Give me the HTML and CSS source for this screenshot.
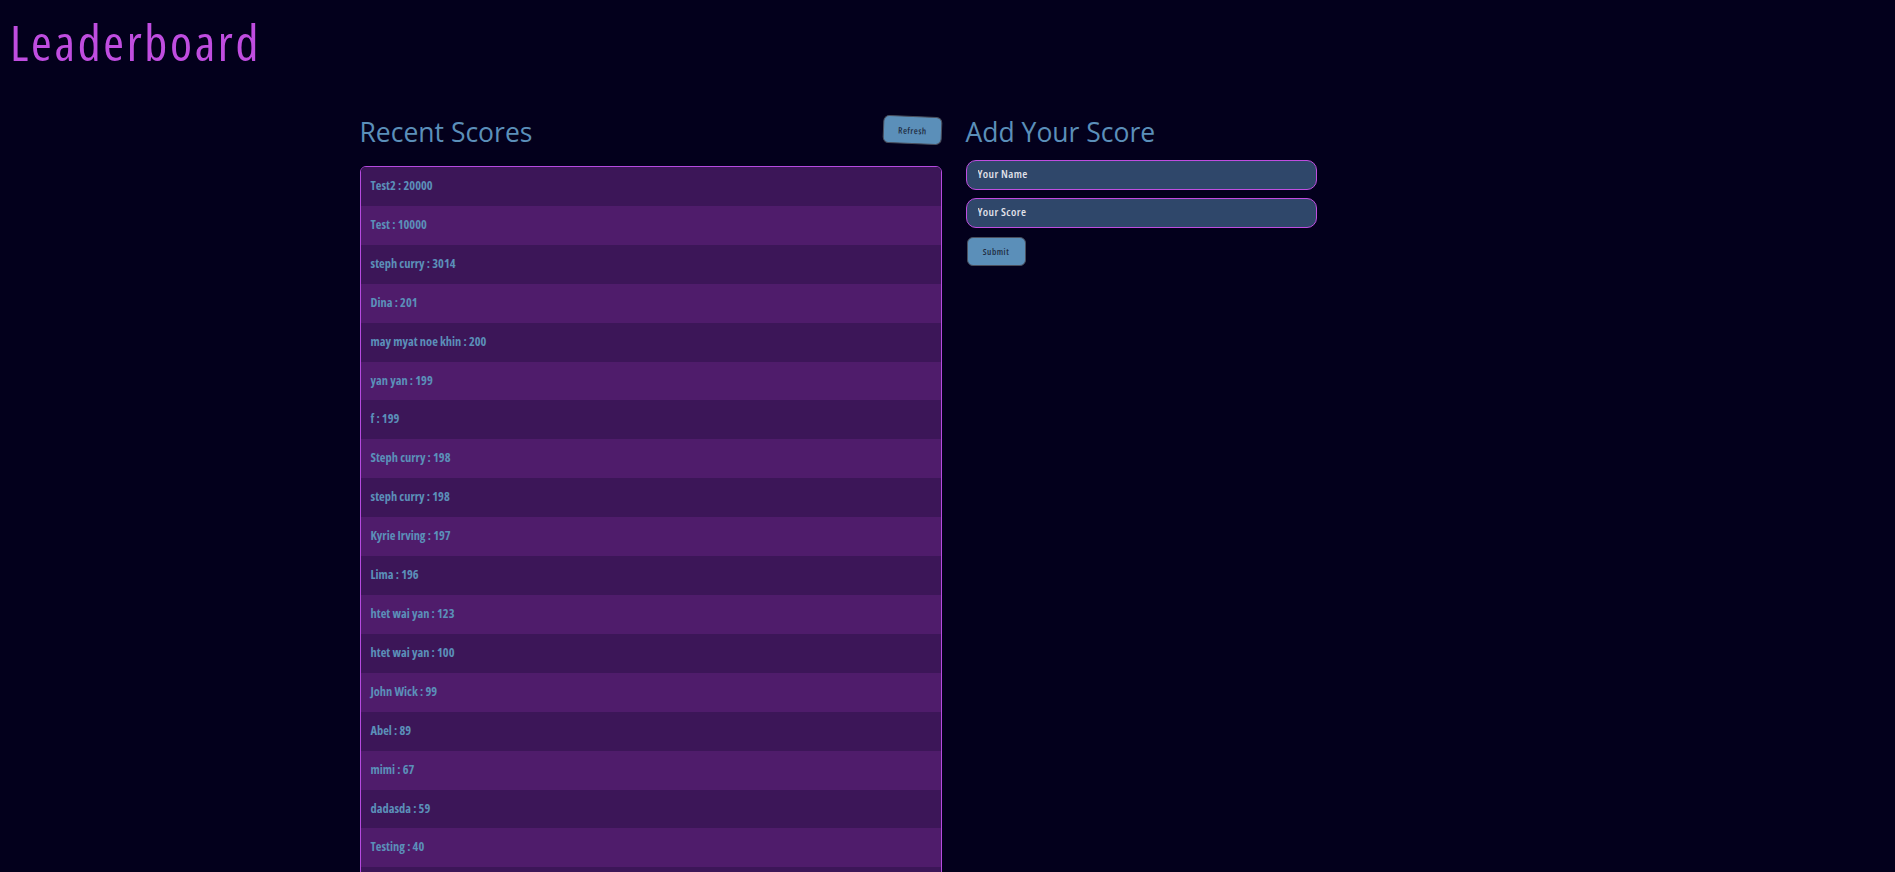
FILE: index.html
```html
<!DOCTYPE html>
<html lang="en">
<head>
<meta charset="utf-8">
<title>Leaderboard</title>
<link rel="stylesheet" href="styles.css">
</head>
<body>
<h1 class="title">Leaderboard</h1>
<main class="board">
  <section class="recent">
    <div class="recent-head">
      <h2 class="section-title">Recent Scores</h2>
      <button class="btn btn-refresh" type="button">Refresh</button>
    </div>
    <ul class="score-list">
      <li class="score">Test2 : 20000</li>
      <li class="score">Test : 10000</li>
      <li class="score">steph curry : 3014</li>
      <li class="score">Dina : 201</li>
      <li class="score">may myat noe khin : 200</li>
      <li class="score">yan yan : 199</li>
      <li class="score">f : 199</li>
      <li class="score">Steph curry : 198</li>
      <li class="score">steph curry : 198</li>
      <li class="score">Kyrie Irving : 197</li>
      <li class="score">Lima : 196</li>
      <li class="score">htet wai yan : 123</li>
      <li class="score">htet wai yan : 100</li>
      <li class="score">John Wick : 99</li>
      <li class="score">Abel : 89</li>
      <li class="score">mimi : 67</li>
      <li class="score">dadasda : 59</li>
      <li class="score">Testing : 40</li>
      <li class="score">test : 20</li>
    </ul>
  </section>
  <section class="add">
    <h2 class="section-title">Add Your Score</h2>
    <form class="add-form">
      <input class="field" type="text" placeholder="Your Name">
      <input class="field" type="text" placeholder="Your Score">
      <button class="btn btn-submit" type="button">Submit</button>
    </form>
  </section>
</main>
</body>
</html>
```
FILE: styles.css
```css
html, body {
  background: #03001c;
}
body {
  margin: 8px;
  font-family: "Open Sans", "Noto Sans", sans-serif;
  color: #5b8fb9;
}
.title {
  margin: 0 0 0 2px;
  font-size: 50px;
  line-height: 68px;
  font-weight: 400;
  font-stretch: 75%;
  letter-spacing: 2.7px;
  color: #c04de0;
}
.board {
  display: grid;
  grid-template-columns: 582px 570px;
  column-gap: 24px;
  justify-content: center;
  align-items: start;
  margin-top: 40px;
}
.recent-head {
  display: flex;
  justify-content: space-between;
  align-items: flex-start;
}
.section-title {
  margin: 0;
  font-size: 26.5px;
  line-height: 32px;
  font-weight: 400;
  color: #5b8fb9;
}
.btn {
  width: 59px;
  height: 28px;
  padding: 0;
  border: 1px solid #4a4f5e;
  border-radius: 6px;
  background: #5b8fb9;
  color: #1f2d42;
  font-family: "Open Sans", sans-serif;
  font-size: 9px;
  font-weight: 600;
  font-stretch: 75%;
  letter-spacing: 0.5px;
}
.btn-refresh {
  transform: rotate(2.2deg);
}
.score-list {
  list-style: none;
  margin: 18px 0 0;
  padding: 0;
  border: 1px solid #b54ade;
  border-radius: 6px;
  overflow: hidden;
}
.score {
  padding: 12px 10px;
  line-height: 14.9px;
  font-size: 12.4px;
  font-weight: 700;
  font-stretch: 75%;
  color: #5b8fb9;
  background: #3c1658;
}
.score:nth-child(even) {
  background: #4f1c6b;
}
.add-form {
  display: flex;
  flex-direction: column;
  align-items: flex-start;
  gap: 8px;
  margin-top: 12px;
}
.field {
  box-sizing: border-box;
  width: 351px;
  height: 30px;
  margin: 0;
  padding: 0 11px 4px;
  border: 1px solid #c04de0;
  border-radius: 10px;
  background: #2f476a;
  color: #e6e6ee;
  font-family: "Open Sans", sans-serif;
  font-size: 11.5px;
  font-weight: 600;
  font-stretch: 75%;
  letter-spacing: 0.4px;
  outline: none;
}
.field::placeholder {
  color: #e3e3ea;
  opacity: 1;
}
.btn-submit {
  margin-top: 1px;
  margin-left: 1px;
  height: 29px;
}
```
